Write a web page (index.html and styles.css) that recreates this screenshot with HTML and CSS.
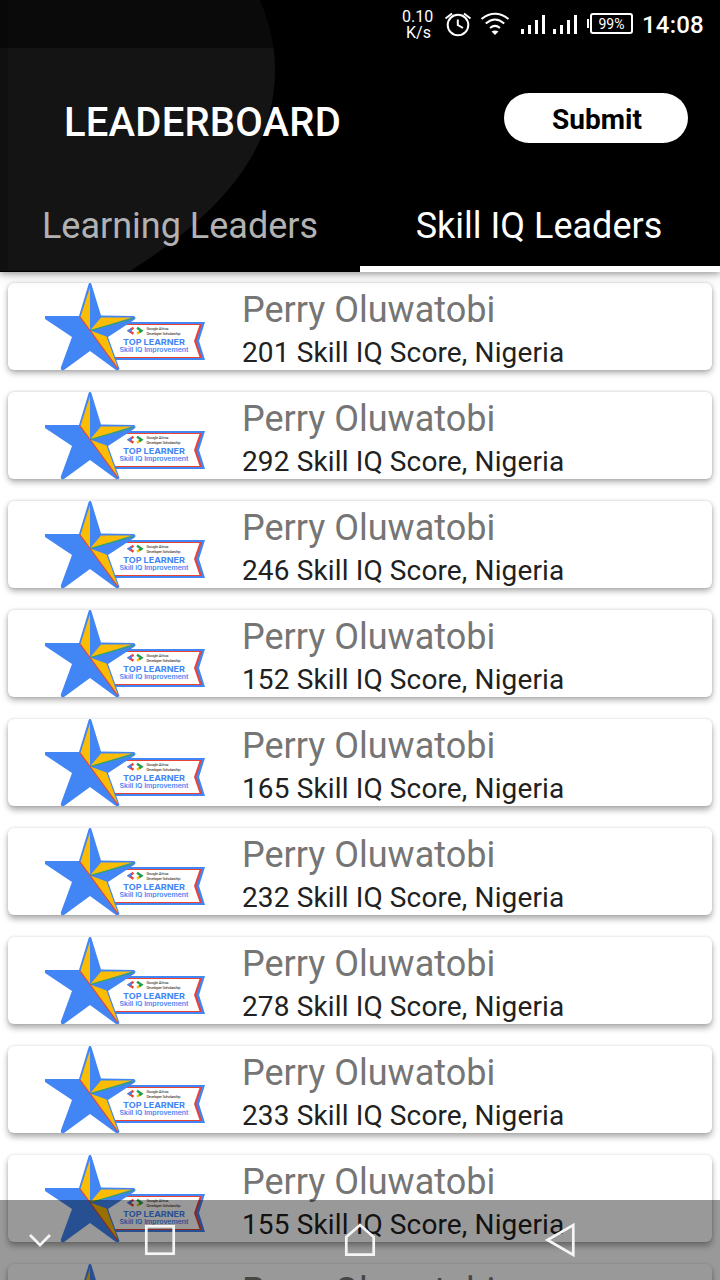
FILE: index.html
```html
<!DOCTYPE html>
<html lang="en">
<head>
<meta charset="utf-8">
<title>Leaderboard</title>
<link rel="stylesheet" href="styles.css">
</head>
<body>
<svg class="defs" width="0" height="0" aria-hidden="true">
  <symbol id="badge" viewBox="0 0 161 88">
    <path fill="#4285f4" d="M82 39H160L154 58L160 77H66Z"/>
    <path fill="#ea4335" d="M82 41H157L151.200 58L157 75H66Z"/>
    <path fill="#fff" d="M60 42H154.500L149 58L154.500 74H60Z"/>
    <path fill="#4285f4" d="M43.500 1.500Q45 -2 46.500 1.500L56 32.500L89 33Q92 35 89 37L63 54L74.500 86Q73 88 71 87L45 68L19 87Q15 88 16 84L27 54L0 36V33H34Z"/>
    <path fill="#fbbc04" d="M45 4V47.500L35.500 34Z"/>
    <path fill="#fbbc04" d="M45 47.500L56 34.500H87Z"/>
    <path fill="#fbbc04" d="M45 47.500L61.500 53.500L73 85Z"/>
    <path fill="none" stroke="#34a853" stroke-width="1.200" d="M45 47.500L88 35.500"/>
    <path fill="none" stroke="#ea4335" stroke-width="1.200" d="M35 34L45 47.500L73 86"/>
    <g fill="none" stroke-width="2.300">
      <path stroke="#ea4335" d="M88.500 44.800L84 47.800L88.500 50.800"/>
      <path stroke="#4285f4" d="M86.500 46.200L84 47.800L85.500 48.800"/>
      <path stroke="#fbbc04" d="M92 50.800L96.500 47.800"/>
      <path stroke="#1e9e4a" d="M92 44.800L96.500 47.800L94.300 49.300"/>
    </g>
    <g font-family="Roboto, sans-serif">
      <text x="101.500" y="47" font-size="4" fill="#222" textLength="22">Google Africa</text>
      <text x="101.500" y="51.500" font-size="4" fill="#222" textLength="34">Developer Scholarship</text>
    </g>
    <g fill="#4285f4" font-family="Inter, sans-serif">
      <text x="78" y="62" font-size="8.200" font-weight="700" textLength="62" lengthAdjust="spacingAndGlyphs">TOP LEARNER</text>
      <text x="74.500" y="68.500" font-size="5.500" font-weight="600" textLength="69" lengthAdjust="spacingAndGlyphs">Skill IQ Improvement</text>
    </g>
  </symbol>
</svg>
<div class="screen">
  <header class="header">
    <svg class="header-shape" width="276" height="271" viewBox="0 0 276 271"><path fill="#141414" d="M0 0H260C270 25 275 45 275 70C275 140 235 205 130 271H0Z"/><path fill="#101010" d="M0 0H8V271H0Z"/></svg>
    <div class="status">
      <div class="speed"><span>0.10</span><span>K/s</span></div>
      <svg class="status-icons" width="146" height="48" viewBox="442 0 146 48" fill="none" stroke="#fff" stroke-width="2">
        <circle cx="458" cy="25" r="10.300"/>
        <path d="M457.800 19.500V25L463 28M445.500 18.500L452 13.500M464 13.500L470.500 18.500"/>
        <path d="M481.500 19Q495 8.500 508.500 19M485.800 23.500Q495 15.500 504.200 23.500M490 28Q495 23.800 500 28"/>
        <path fill="#fff" stroke="none" d="M491.500 31.500Q495 29.500 498.500 31.500L495 35Z"/>
        <path stroke-width="3" d="M522.500 29V34M529.500 25V34M536.500 20V34M543.500 15V34M554.500 29V34M561.500 25V34M568.500 20V34M575.500 15V34"/>
        <path d="M588 19V28"/>
      </svg>
      <div class="battery">99%</div>
      <span class="clock">14:08</span>
    </div>
    <div class="toolbar">
      <h1 class="title">LEADERBOARD</h1>
      <button class="submit">Submit</button>
    </div>
    <nav class="tabs">
      <div class="tab">Learning Leaders</div>
      <div class="tab active">Skill IQ Leaders</div>
    </nav>
  </header>
  <main class="list">
    <article class="card"><svg class="badge"><use href="#badge"/></svg><div class="info"><div class="name">Perry Oluwatobi</div><div class="score">201 Skill IQ Score, Nigeria</div></div></article>
    <article class="card"><svg class="badge"><use href="#badge"/></svg><div class="info"><div class="name">Perry Oluwatobi</div><div class="score">292 Skill IQ Score, Nigeria</div></div></article>
    <article class="card"><svg class="badge"><use href="#badge"/></svg><div class="info"><div class="name">Perry Oluwatobi</div><div class="score">246 Skill IQ Score, Nigeria</div></div></article>
    <article class="card"><svg class="badge"><use href="#badge"/></svg><div class="info"><div class="name">Perry Oluwatobi</div><div class="score">152 Skill IQ Score, Nigeria</div></div></article>
    <article class="card"><svg class="badge"><use href="#badge"/></svg><div class="info"><div class="name">Perry Oluwatobi</div><div class="score">165 Skill IQ Score, Nigeria</div></div></article>
    <article class="card"><svg class="badge"><use href="#badge"/></svg><div class="info"><div class="name">Perry Oluwatobi</div><div class="score">232 Skill IQ Score, Nigeria</div></div></article>
    <article class="card"><svg class="badge"><use href="#badge"/></svg><div class="info"><div class="name">Perry Oluwatobi</div><div class="score">278 Skill IQ Score, Nigeria</div></div></article>
    <article class="card"><svg class="badge"><use href="#badge"/></svg><div class="info"><div class="name">Perry Oluwatobi</div><div class="score">233 Skill IQ Score, Nigeria</div></div></article>
    <article class="card"><svg class="badge"><use href="#badge"/></svg><div class="info"><div class="name">Perry Oluwatobi</div><div class="score">155 Skill IQ Score, Nigeria</div></div></article>
    <article class="card"><svg class="badge"><use href="#badge"/></svg><div class="info"><div class="name">Perry Oluwatobi</div></div></article>
  </main>
  <footer class="navbar">
    <svg width="720" height="80" viewBox="0 1200 720 80" fill="none" stroke="#f5f5f5" stroke-width="2.700">
      <path d="M30 1235L40 1245L50 1235"/>
      <rect x="146.300" y="1226.300" width="27.400" height="27.400"/>
      <path d="M346.300 1254.700V1237L360 1225L373.700 1237V1254.700Z"/>
      <path d="M573.300 1225V1255L547.500 1240Z"/>
    </svg>
  </footer>
</div>
</body>
</html>
```
FILE: styles.css
```css
* { box-sizing: border-box; }
body { margin: 0; background: #fff; font-family: Roboto, sans-serif; }
.defs { position: absolute; }
.screen { position: relative; width: 720px; height: 1280px; overflow: hidden; background: #fff; }
.header {
  position: relative;
  z-index: 1;
  height: 272px;
  color: #fff;
  background: #000;
  box-shadow: 0 2px 6px rgba(0,0,0,.3), 0 3px 14px rgba(0,0,0,.14);
}
.header-shape { position: absolute; left: 0; top: 0; z-index: -1; }
.status { display: flex; height: 48px; background: rgba(0,0,0,.5); padding-left: 402px; }
.speed { width: 40px; padding-top: 8px; display: flex; flex-direction: column; font-size: 16px; line-height: 17px; }
.speed span + span { padding-left: 4px; line-height: 16px; }
.status-icons { display: block; flex: none; overflow: visible; }
.battery { width: 43px; height: 21px; margin: 13px 0 0 2px; border: 2px solid #fff; border-radius: 3px; font-size: 14px; line-height: 18px; text-align: center; }
.clock { margin-left: 9px; font-size: 24px; line-height: 50px; font-weight: 500; letter-spacing: .2px; }
.toolbar { height: 132px; padding: 45px 32px 0 64px; display: flex; justify-content: space-between; }
.title { margin: 7px 0 0; font-size: 40px; line-height: 46px; font-weight: 500; letter-spacing: .2px; }
.submit { width: 184px; height: 50px; border: 0; border-radius: 25px; padding: 3px 0 0 2px; background: #fff; color: #000; font: 700 28px/47px Roboto, sans-serif; }
.tabs { display: flex; height: 92px; }
.tab { width: 360px; padding: 22px 0 0; text-align: center; font-size: 36px; line-height: 48px; color: #b2b2b2; }
.tab.active { color: #fff; border-bottom: 6px solid #fff; padding-right: 2px; }
.list { display: flex; flex-direction: column; gap: 22px; padding: 11px 8px 0; }
.card { flex: none; display: flex; height: 87px; padding-left: 37px; border-radius: 6px; background: #fff; box-shadow: 0 3px 6px rgba(0,0,0,.32), 0 0 3px rgba(0,0,0,.14); }
.card:nth-child(n+5) { box-shadow: 0 4px 6px rgba(0,0,0,.32), 0 0 3px rgba(0,0,0,.12); }
.badge { width: 161px; height: 88px; flex: none; }
.info { padding: 6px 0 0 36px; white-space: nowrap; }
.name { font-size: 36px; line-height: 43px; color: #757575; }
.score { font-size: 28px; line-height: 42px; color: #212121; letter-spacing: .13px; }
.navbar { position: absolute; left: 0; bottom: 0; width: 720px; height: 80px; background: rgba(0,0,0,.4); z-index: 2; }
.navbar svg { display: block; }
```
